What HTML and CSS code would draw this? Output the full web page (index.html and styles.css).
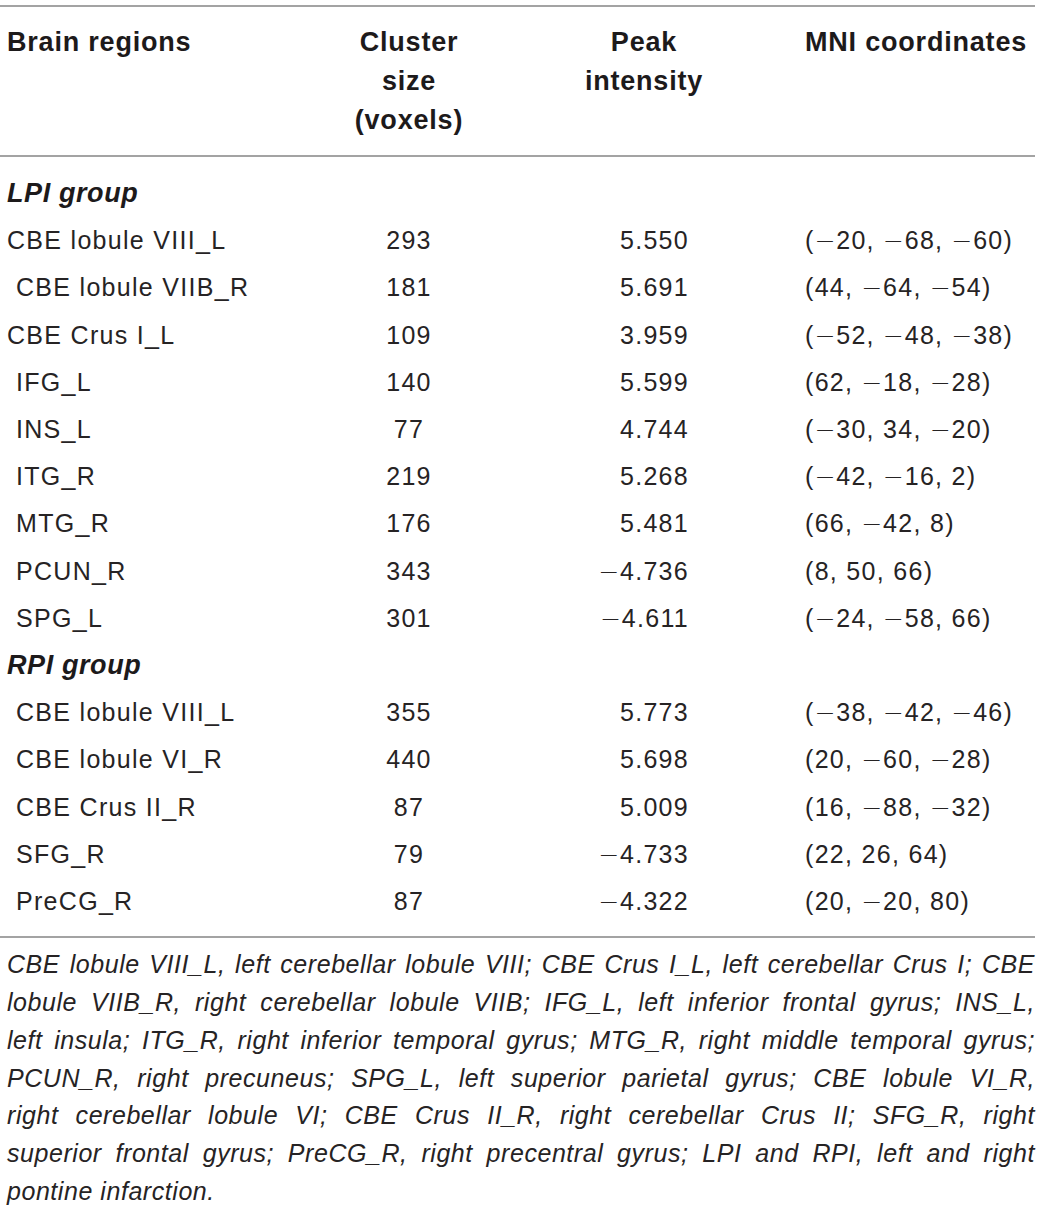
FILE: index.html
```html
<!DOCTYPE html>
<html lang="en">
<head>
  <meta charset="UTF-8">
  <meta name="viewport" content="width=device-width, initial-scale=1.0">
  <title>Brain regions table</title>
  <link rel="stylesheet" href="styles.css">
</head>
<body>
  <div class="table-wrap">
    <table class="regions">
      <thead>
        <tr>
          <th class="col-name">Brain regions</th>
          <th class="col-size">Cluster<br>size<br>(voxels)</th>
          <th class="col-peak">Peak<br>intensity</th>
          <th class="col-mni">MNI coordinates</th>
        </tr>
      </thead>
      <tbody>
        <tr class="group first">
          <td colspan="4">LPI group</td>
        </tr>
        <tr>
          <td class="col-name">CBE lobule VIII_L</td>
          <td class="col-size">293</td>
          <td class="col-peak">5.550</td>
          <td class="col-mni">(<span class="neg">−</span>20, <span class="neg">−</span>68, <span class="neg">−</span>60)</td>
        </tr>
        <tr>
          <td class="col-name indent">CBE lobule VIIB_R</td>
          <td class="col-size">181</td>
          <td class="col-peak">5.691</td>
          <td class="col-mni">(44, <span class="neg">−</span>64, <span class="neg">−</span>54)</td>
        </tr>
        <tr>
          <td class="col-name">CBE Crus I_L</td>
          <td class="col-size">109</td>
          <td class="col-peak">3.959</td>
          <td class="col-mni">(<span class="neg">−</span>52, <span class="neg">−</span>48, <span class="neg">−</span>38)</td>
        </tr>
        <tr>
          <td class="col-name indent">IFG_L</td>
          <td class="col-size">140</td>
          <td class="col-peak">5.599</td>
          <td class="col-mni">(62, <span class="neg">−</span>18, <span class="neg">−</span>28)</td>
        </tr>
        <tr>
          <td class="col-name indent">INS_L</td>
          <td class="col-size">77</td>
          <td class="col-peak">4.744</td>
          <td class="col-mni">(<span class="neg">−</span>30, 34, <span class="neg">−</span>20)</td>
        </tr>
        <tr>
          <td class="col-name indent">ITG_R</td>
          <td class="col-size">219</td>
          <td class="col-peak">5.268</td>
          <td class="col-mni">(<span class="neg">−</span>42, <span class="neg">−</span>16, 2)</td>
        </tr>
        <tr>
          <td class="col-name indent">MTG_R</td>
          <td class="col-size">176</td>
          <td class="col-peak">5.481</td>
          <td class="col-mni">(66, <span class="neg">−</span>42, 8)</td>
        </tr>
        <tr>
          <td class="col-name indent">PCUN_R</td>
          <td class="col-size">343</td>
          <td class="col-peak"><span class="neg">−</span>4.736</td>
          <td class="col-mni">(8, 50, 66)</td>
        </tr>
        <tr>
          <td class="col-name indent">SPG_L</td>
          <td class="col-size">301</td>
          <td class="col-peak"><span class="neg">−</span>4.611</td>
          <td class="col-mni">(<span class="neg">−</span>24, <span class="neg">−</span>58, 66)</td>
        </tr>
        <tr class="group">
          <td colspan="4">RPI group</td>
        </tr>
        <tr>
          <td class="col-name indent">CBE lobule VIII_L</td>
          <td class="col-size">355</td>
          <td class="col-peak">5.773</td>
          <td class="col-mni">(<span class="neg">−</span>38, <span class="neg">−</span>42, <span class="neg">−</span>46)</td>
        </tr>
        <tr>
          <td class="col-name indent">CBE lobule VI_R</td>
          <td class="col-size">440</td>
          <td class="col-peak">5.698</td>
          <td class="col-mni">(20, <span class="neg">−</span>60, <span class="neg">−</span>28)</td>
        </tr>
        <tr>
          <td class="col-name indent">CBE Crus II_R</td>
          <td class="col-size">87</td>
          <td class="col-peak">5.009</td>
          <td class="col-mni">(16, <span class="neg">−</span>88, <span class="neg">−</span>32)</td>
        </tr>
        <tr>
          <td class="col-name indent">SFG_R</td>
          <td class="col-size">79</td>
          <td class="col-peak"><span class="neg">−</span>4.733</td>
          <td class="col-mni">(22, 26, 64)</td>
        </tr>
        <tr class="last">
          <td class="col-name indent">PreCG_R</td>
          <td class="col-size">87</td>
          <td class="col-peak"><span class="neg">−</span>4.322</td>
          <td class="col-mni">(20, <span class="neg">−</span>20, 80)</td>
        </tr>
      </tbody>
    </table>

    <div class="footnote">
      <div class="fn-line">CBE lobule VIII_L, left cerebellar lobule VIII; CBE Crus I_L, left cerebellar Crus I; CBE</div>
      <div class="fn-line">lobule VIIB_R, right cerebellar lobule VIIB; IFG_L, left inferior frontal gyrus; INS_L,</div>
      <div class="fn-line">left insula; ITG_R, right inferior temporal gyrus; MTG_R, right middle temporal gyrus;</div>
      <div class="fn-line">PCUN_R, right precuneus; SPG_L, left superior parietal gyrus; CBE lobule VI_R,</div>
      <div class="fn-line">right cerebellar lobule VI; CBE Crus II_R, right cerebellar Crus II; SFG_R, right</div>
      <div class="fn-line">superior frontal gyrus; PreCG_R, right precentral gyrus; LPI and RPI, left and right</div>
      <div class="fn-line end">pontine infarction.</div>
    </div>
  </div>
</body>
</html>
```

FILE: styles.css
```css
* {
  margin: 0;
  padding: 0;
  box-sizing: border-box;
}
body {
  font-family: "Liberation Sans", Arial, sans-serif;
  background-color: #fff;
  color: #262324;
  padding-top: 5px;
}
.table-wrap {
  width: 1035px;
}
.regions {
  width: 1035px;
  border-collapse: collapse;
  table-layout: fixed;
  border-top: 2px solid #a3a3a3;
  border-bottom: 2px solid #a3a3a3;
}
.regions thead {
  border-bottom: 2px solid #a3a3a3;
}
.regions th {
  font-size: 27px;
  font-weight: bold;
  line-height: 39px;
  letter-spacing: 0.8px;
  vertical-align: top;
  padding-top: 16px;
  padding-bottom: 15px;
  color: #1d1a1b;
  white-space: nowrap;
}
.regions td {
  font-size: 25px;
  line-height: 47.2px;
  height: 47.2px;
  letter-spacing: 1.3px;
  padding: 0;
  white-space: nowrap;
}
/* wider minus, closer to the typeset table */
.neg {
  font-family: "DejaVu Sans", sans-serif;
  font-weight: 300;
  letter-spacing: 0.6px;
}
.col-name {
  width: 330px;
  text-align: left;
  padding-left: 7px !important;
}
.col-name.indent {
  padding-left: 16px !important;
}
.col-size {
  width: 158px;
  text-align: center;
}
.col-peak {
  width: 312px;
  text-align: center;
}
td.col-peak {
  text-align: right;
  padding-right: 111px !important;
}
.col-mni {
  width: 235px;
  text-align: left;
  padding-left: 5px !important;
}
.group td {
  font-weight: bold;
  font-style: italic;
  font-size: 27px;
  letter-spacing: 0.6px;
  padding-left: 7px !important;
  color: #1d1a1b;
}
.group.first td {
  padding-top: 13px !important;
  height: 60px;
}
.last td {
  padding-bottom: 11px !important;
  height: 58px;
}
.footnote {
  padding: 8px 0 0 7px;
  font-size: 25px;
  font-style: italic;
  line-height: 37.8px;
  letter-spacing: 0.55px;
}
.fn-line {
  text-align: justify;
  text-align-last: justify;
  white-space: nowrap;
}
.fn-line.end {
  text-align-last: left;
}
```
